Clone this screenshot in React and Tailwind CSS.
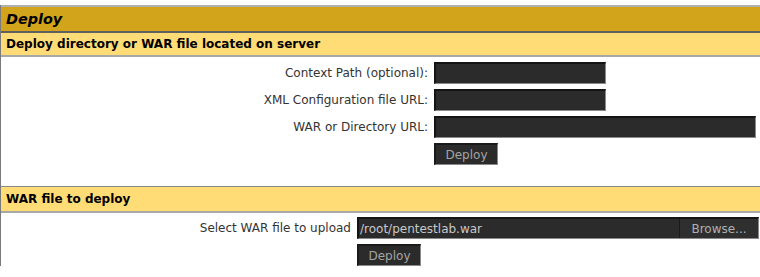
export default function App() {
  const font = { fontFamily: '"DejaVu Sans", sans-serif' };
  const inputCls =
    "h-[22px] bg-[#2b2b2b] border-t-2 border-l-2 border-b border-r border-t-[#141414] border-l-[#141414] border-b-[#8a8a8a] border-r-[#8a8a8a]";
  const btnCls =
    "h-[22px] w-[64px] bg-[#2b2b2b] text-[#a4a4a4] text-[12px] leading-none border-t-2 border-l-2 border-b border-r border-t-[#1a1a1a] border-l-[#1a1a1a] border-b-[#8a8a8a] border-r-[#8a8a8a]";
  return (
    <div className="w-[760px] h-[277px] bg-white overflow-hidden pt-[5px]" style={font}>
      <div className="w-[780px] border-l border-l-[#7a7a7a]">
        <div className="h-[28px] bg-[#d2a41c] border-t-2 border-t-[#b0b0b0] border-b-2 border-b-[#606060] flex items-center pl-[5px]">
          <span className="text-[14.4px] font-bold italic text-black leading-none">Deploy</span>
        </div>
        <div className="h-[24px] bg-[#ffdc75] border-b-2 border-b-[#a8a8a8] flex items-center pl-[5px]">
          <span className="text-[12px] font-bold text-black leading-none">Deploy directory or WAR file located on server</span>
        </div>
        <div className="h-[129px] pt-[5px] grid grid-cols-[427px_1fr] gap-x-[6px] gap-y-[5px] auto-rows-[22px] text-[12px] text-[#333]">
          <div className="flex items-center justify-end">Context Path (optional):</div>
          <div className={inputCls + " w-[172px]"} />
          <div className="flex items-center justify-end">XML Configuration file URL:</div>
          <div className={inputCls + " w-[172px]"} />
          <div className="flex items-center justify-end">WAR or Directory URL:</div>
          <div className={inputCls + " w-[322px]"} />
          <div />
          <div>
            <button className={btnCls}>Deploy</button>
          </div>
        </div>
        <div className="h-[27px] bg-[#ffdc75] border-t border-t-[#8a8a8a] border-b-2 border-b-[#a8a8a8] flex items-center pl-[5px]">
          <span className="text-[12px] font-bold text-black leading-none">WAR file to deploy</span>
        </div>
        <div className="pt-[4px] grid grid-cols-[350px_1fr] gap-x-[6px] gap-y-[5px] auto-rows-[22px] text-[12px] text-[#333]">
          <div className="flex items-center justify-end">Select WAR file to upload</div>
          <div className={"flex w-[402px] " + inputCls}>
            <div className="flex-1 flex items-center pl-[1px] text-[#c8c8c8] text-[12px]">/root/pentestlab.war</div>
            <div className="w-[79px] h-full bg-[#2f2f2f] border-l border-l-[#1a1a1a] flex items-center justify-center text-[#b0b0b0] text-[12px]">
              Browse...
            </div>
          </div>
          <div />
          <div>
            <button className={btnCls}>Deploy</button>
          </div>
        </div>
      </div>
    </div>
  );
}
